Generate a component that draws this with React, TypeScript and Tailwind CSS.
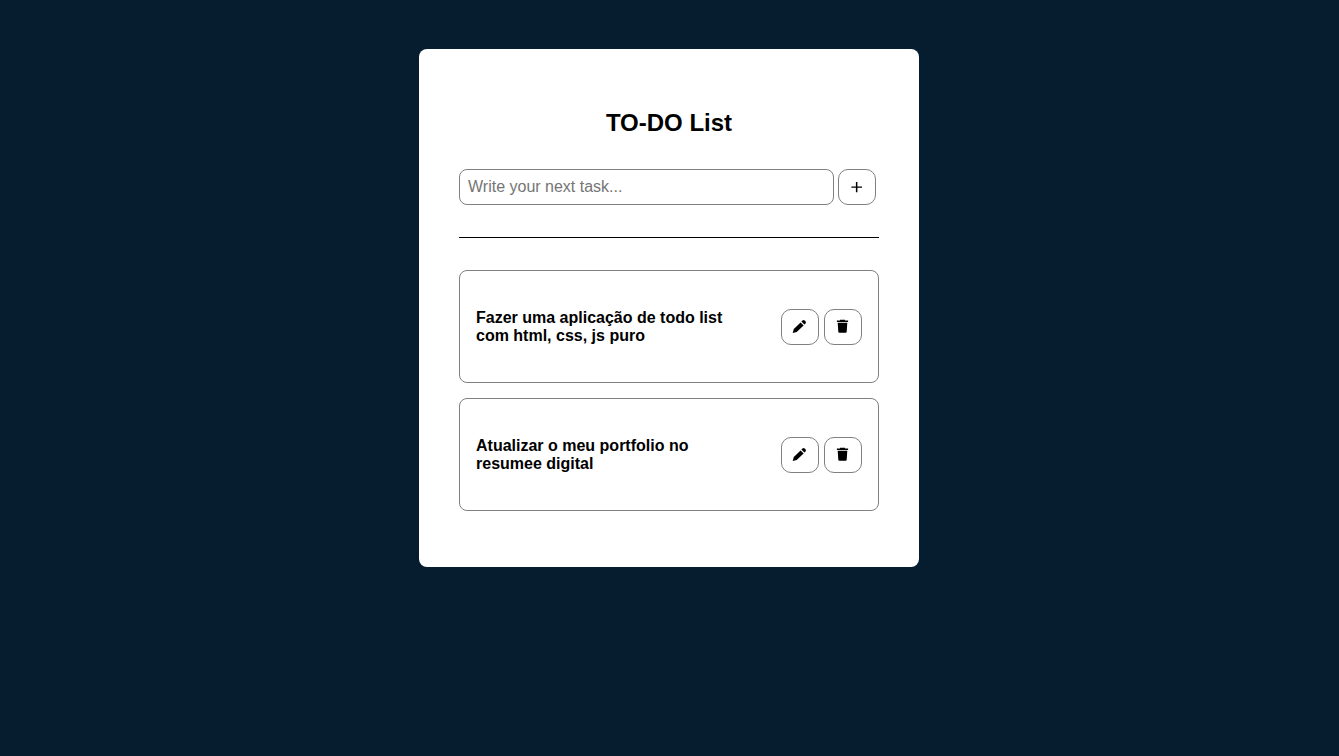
import type { ReactNode } from "react";

const tasks = [
  "Fazer uma aplicação de todo list com html, css, js puro",
  "Atualizar o meu portfolio no resumee digital",
];

function PlusIcon() {
  return (
    <svg viewBox="0 0 16 16" className="size-4" fill="currentColor" aria-hidden="true">
      <path d="M6.9 3h1.5v4.5H13v1.3H8.4v4.5H6.9V8.8H2.4V7.5h4.5z" />
    </svg>
  );
}

function PencilIcon() {
  return (
    <svg viewBox="0 0 16 16" className="size-4" fill="currentColor" aria-hidden="true">
      <path d="M.7 14.1 1.8 9.9 8.6 3.4l3 3-6.9 6.7z" />
      <path d="m9.4 2.6 1.1-1.1a1.6 1.6 0 0 1 2.2 0l.8.8a1.6 1.6 0 0 1 0 2.2l-1.1 1.1z" />
    </svg>
  );
}

function TrashIcon() {
  return (
    <svg viewBox="0 0 16 16" className="size-4" fill="currentColor" aria-hidden="true">
      <path d="M5 .8h5v.7h3.1V3H1.9V1.5H5z" />
      <path d="M2.7 3.8h9.6l-.6 9a1 1 0 0 1-1 .9H4.3a1 1 0 0 1-1-.9z" />
    </svg>
  );
}

function IconButton({ label, children }: { label: string; children: ReactNode }) {
  return (
    <button
      type="button"
      aria-label={label}
      className="flex h-9 w-[38px] shrink-0 items-center justify-center rounded-[10px] border border-[#808080] bg-white text-base text-black"
    >
      {children}
    </button>
  );
}

function Task({ text }: { text: string }) {
  return (
    <li className="flex min-h-[113px] items-center justify-between rounded-lg border border-[#808080] px-4">
      <h3 className="w-[270px] text-base leading-[18px] font-bold">{text}</h3>
      <div className="flex gap-[5px]">
        <IconButton label={`Edit: ${text}`}>
          <PencilIcon />
        </IconButton>
        <IconButton label={`Delete: ${text}`}>
          <TrashIcon />
        </IconButton>
      </div>
    </li>
  );
}

export default function App() {
  return (
    <div className="min-h-screen bg-[#061d30] py-[49px] pr-[17px] pl-4 font-['Liberation_Sans',Arial,sans-serif] text-black">
      <main className="mx-auto w-full max-w-[500px] rounded-lg bg-white px-10 pt-15 pb-14">
        <h1 className="text-center text-2xl leading-7 font-bold">TO-DO List</h1>
        <form className="mt-8 flex gap-1 pr-[3px]" onSubmit={(e) => e.preventDefault()}>
          <input
            type="text"
            aria-label="Next task"
            placeholder="Write your next task..."
            className="h-9 min-w-0 flex-1 rounded-lg border border-[#808080] px-2 text-base placeholder:text-[#757575]"
          />
          <IconButton label="Add task">
            <PlusIcon />
          </IconButton>
        </form>
        <hr className="my-8 border-black" />
        <ul className="flex flex-col gap-[15px]">
          {tasks.map((task) => (
            <Task key={task} text={task} />
          ))}
        </ul>
      </main>
    </div>
  );
}
